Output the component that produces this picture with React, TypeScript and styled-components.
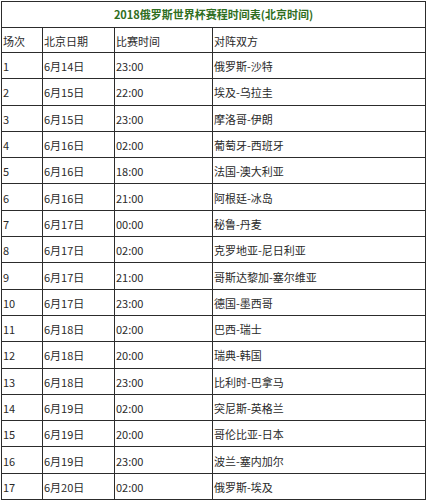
import React from 'react';
import styled, { createGlobalStyle } from 'styled-components';

const matches = [
  { no: 1, date: '6月14日', time: '23:00', teams: '俄罗斯-沙特' },
  { no: 2, date: '6月15日', time: '22:00', teams: '埃及-乌拉圭' },
  { no: 3, date: '6月15日', time: '23:00', teams: '摩洛哥-伊朗' },
  { no: 4, date: '6月16日', time: '02:00', teams: '葡萄牙-西班牙' },
  { no: 5, date: '6月16日', time: '18:00', teams: '法国-澳大利亚' },
  { no: 6, date: '6月16日', time: '21:00', teams: '阿根廷-冰岛' },
  { no: 7, date: '6月17日', time: '00:00', teams: '秘鲁-丹麦' },
  { no: 8, date: '6月17日', time: '02:00', teams: '克罗地亚-尼日利亚' },
  { no: 9, date: '6月17日', time: '21:00', teams: '哥斯达黎加-塞尔维亚' },
  { no: 10, date: '6月17日', time: '23:00', teams: '德国-墨西哥' },
  { no: 11, date: '6月18日', time: '02:00', teams: '巴西-瑞士' },
  { no: 12, date: '6月18日', time: '20:00', teams: '瑞典-韩国' },
  { no: 13, date: '6月18日', time: '23:00', teams: '比利时-巴拿马' },
  { no: 14, date: '6月19日', time: '02:00', teams: '突尼斯-英格兰' },
  { no: 15, date: '6月19日', time: '20:00', teams: '哥伦比亚-日本' },
  { no: 16, date: '6月19日', time: '23:00', teams: '波兰-塞内加尔' },
  { no: 17, date: '6月20日', time: '02:00', teams: '俄罗斯-埃及' },
];

const GlobalStyle = createGlobalStyle`
  html, body {
    margin: 0;
    padding: 0;
    background: #fff;
  }
  body {
    font-family: "Noto Sans CJK SC", "Liberation Sans", sans-serif;
    color: #333;
  }
`;

const Page = styled.div`
  padding: 1px 1px 0 1px;
  width: 426px;
  box-sizing: border-box;
  overflow: hidden;
`;

const Schedule = styled.table`
  width: 424px;
  border-collapse: collapse;
  table-layout: fixed;
  font-size: 11px;
  line-height: 1;
`;

const TitleCell = styled.th`
  border: 1px solid #2c2c2c;
  height: 25px;
  padding: 0;
  text-align: center;
  color: #2f6e22;
  font-weight: 700;
  font-size: 11px;
`;

// 헤더 줄은 본문 줄보다 1px 낮음, 글자는 살짝 아래쪽
const Cell = styled.td<{ $head?: boolean }>`
  border: 1px solid #2c2c2c;
  height: ${(p) => (p.$head ? '22px' : '23.3px')};
  padding: 2px 0 0 1px;
  text-align: left;
  white-space: nowrap;
  overflow: hidden;
  color: #2a2a2a;
  font-weight: 400;
`;

const App: React.FC = () => {
  return (
    <Page>
      <GlobalStyle />
      <Schedule>
        <colgroup>
          <col style={{ width: 41 }} />
          <col style={{ width: 72 }} />
          <col style={{ width: 98 }} />
          <col style={{ width: 213 }} />
        </colgroup>
        <thead>
          <tr>
            <TitleCell colSpan={4}>2018俄罗斯世界杯赛程时间表(北京时间)</TitleCell>
          </tr>
          <tr>
            <Cell $head>场次</Cell>
            <Cell $head>北京日期</Cell>
            <Cell $head>比赛时间</Cell>
            <Cell $head>对阵双方</Cell>
          </tr>
        </thead>
        <tbody>
          {matches.map((m) => (
            <tr key={m.no}>
              <Cell>{m.no}</Cell>
              <Cell>{m.date}</Cell>
              <Cell>{m.time}</Cell>
              <Cell>{m.teams}</Cell>
            </tr>
          ))}
        </tbody>
      </Schedule>
    </Page>
  );
};

export default App;
